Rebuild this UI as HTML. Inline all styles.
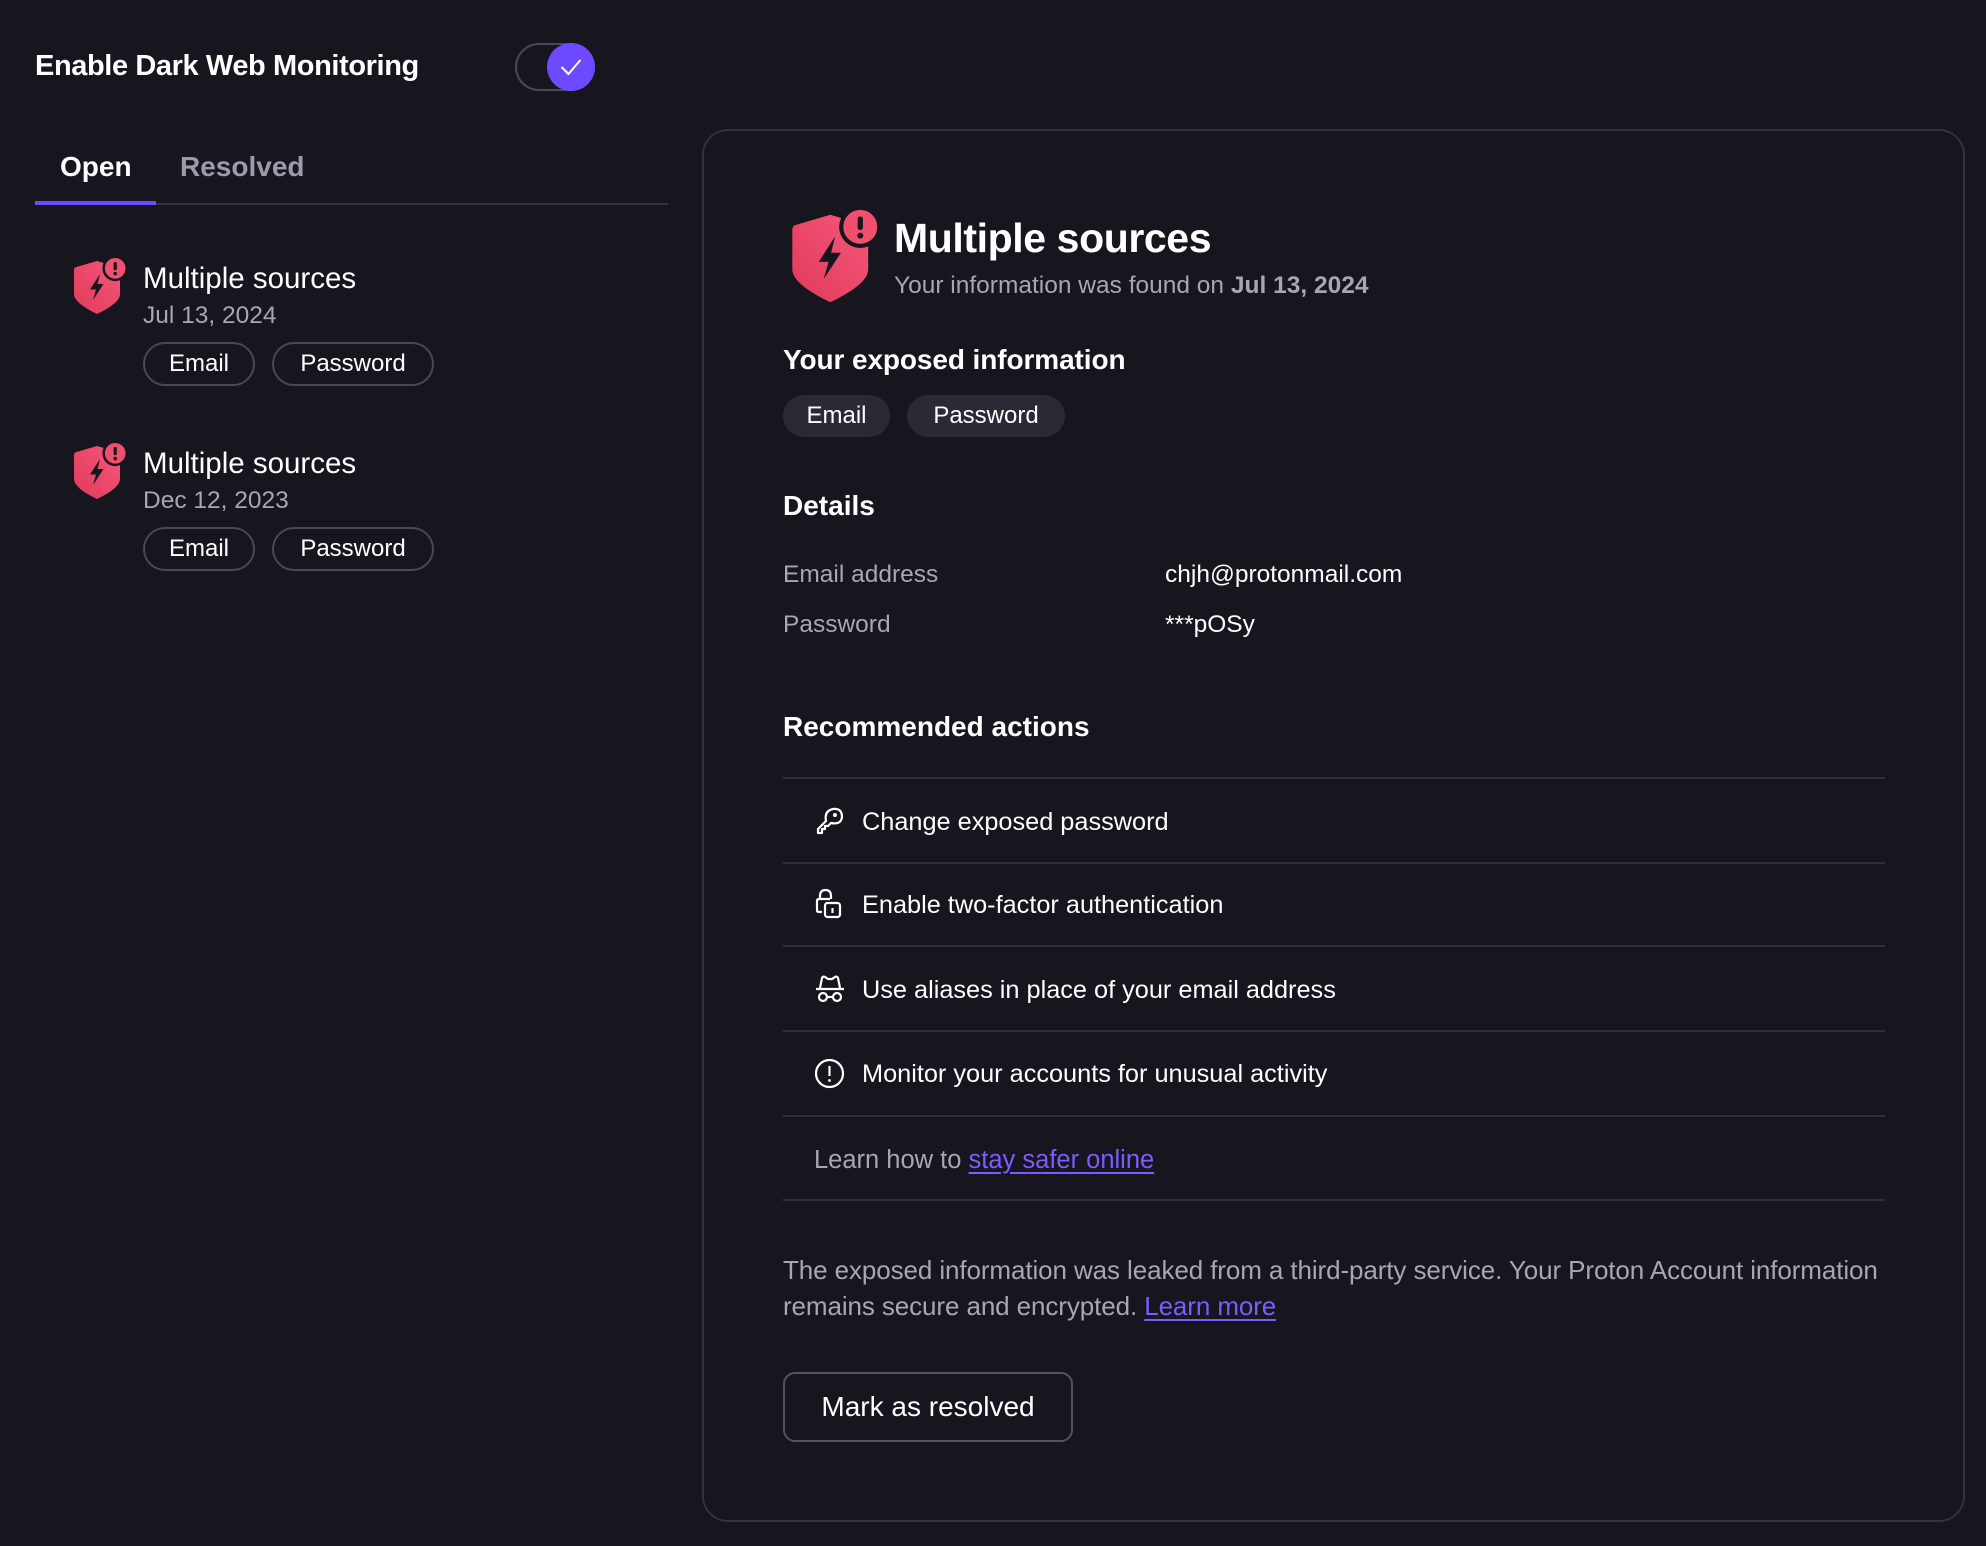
<!DOCTYPE html>
<html><head><meta charset="utf-8"><style>
*{margin:0;padding:0;box-sizing:border-box}
body{width:1986px;height:1546px;background:#17151d;color:#fff;font-family:"Liberation Sans",sans-serif;position:relative;overflow:hidden}
.a{position:absolute;white-space:nowrap}
.g{color:#a9a5b5}
.chip{position:absolute;height:44px;border:2px solid #4a4756;border-radius:22px;font-size:24px;line-height:40px;text-align:center}
.fchip{position:absolute;height:42px;background:#2b2934;border-radius:21px;font-size:24px;line-height:42px;text-align:center}
.line{position:absolute;left:783px;width:1102px;height:2px;background:#302e39}
.lnk{color:#7d5cff;text-decoration:underline;text-underline-offset:4px}
</style></head><body>
<svg width="0" height="0" style="position:absolute"><defs>
<linearGradient id="gr" x1="0" y1="1" x2="1" y2="0"><stop offset="0" stop-color="#e03a5a"/><stop offset="1" stop-color="#f6577a"/></linearGradient>
<symbol id="sh" viewBox="0 0 60 64">
<path d="M2 13 Q2 10.5 4.5 10 L25 4 L45.5 10 Q48 10.5 48 13 L48 37 Q48 46 25 57 Q2 46 2 37 Z" fill="url(#gr)"/>
<path d="M28 17 L18 32.5 L24 32.5 L21 43 L31.5 27 L25.5 27 Z" fill="#17151d"/>
<circle cx="43.2" cy="11.3" r="12.8" fill="#17151d"/>
<circle cx="43.2" cy="11.3" r="10.3" fill="#f0506e"/>
<rect x="41.6" y="5" width="3.2" height="8.2" rx="1.5" fill="#17151d"/>
<circle cx="43.2" cy="16.6" r="1.8" fill="#17151d"/>
</symbol></defs></svg>

<div class="a" style="left:35px;top:50px;font-size:29px;font-weight:bold;letter-spacing:-0.4px">Enable Dark Web Monitoring</div>
<div class="a" style="left:515px;top:43px;width:80px;height:48px;border:2px solid #4a4756;border-radius:24px"></div>
<div class="a" style="left:547px;top:43px;width:48px;height:48px;border-radius:50%;background:#6d4aff">
<svg width="48" height="48" viewBox="0 0 48 48"><path d="M15 24.5 L21.5 31 L33 17.5" stroke="#fff" stroke-width="2" fill="none" stroke-linecap="round" stroke-linejoin="round"/></svg></div>

<div class="a" style="left:60px;top:151px;font-size:28px;font-weight:bold">Open</div>
<div class="a g" style="left:180px;top:151px;font-size:28px;font-weight:bold;color:#9e9aab">Resolved</div>
<div class="a" style="left:35px;top:203px;width:633px;height:2px;background:#34323d"></div>
<div class="a" style="left:35px;top:201px;width:121px;height:4px;background:#6d4aff"></div>

<svg class="a" style="left:72px;top:257px" width="60" height="64"><use href="#sh"/></svg>
<div class="a" style="left:143px;top:262px;font-size:29.5px">Multiple sources</div>
<div class="a g" style="left:143px;top:302px;font-size:24.5px">Jul 13, 2024</div>
<div class="chip" style="left:143px;top:342px;width:112px">Email</div>
<div class="chip" style="left:272px;top:342px;width:162px">Password</div>

<svg class="a" style="left:72px;top:442px" width="60" height="64"><use href="#sh"/></svg>
<div class="a" style="left:143px;top:447px;font-size:29.5px">Multiple sources</div>
<div class="a g" style="left:143px;top:487px;font-size:24.5px">Dec 12, 2023</div>
<div class="chip" style="left:143px;top:527px;width:112px">Email</div>
<div class="chip" style="left:272px;top:527px;width:162px">Password</div>

<div class="a" style="left:702px;top:129px;width:1263px;height:1393px;border:2px solid #34323d;border-radius:26px"></div>

<svg class="a" style="left:789px;top:208px" width="99" height="106"><use href="#sh"/></svg>
<div class="a" style="left:894px;top:215px;font-size:41px;font-weight:bold;letter-spacing:-0.4px">Multiple sources</div>
<div class="a g" style="left:894px;top:272px;font-size:24.5px">Your information was found on <b>Jul 13, 2024</b></div>

<div class="a" style="left:783px;top:344px;font-size:28px;font-weight:bold;letter-spacing:-0.1px">Your exposed information</div>
<div class="fchip" style="left:783px;top:395px;width:107px">Email</div>
<div class="fchip" style="left:907px;top:395px;width:158px">Password</div>

<div class="a" style="left:783px;top:490px;font-size:28px;font-weight:bold">Details</div>
<div class="a g" style="left:783px;top:561px;font-size:24.5px">Email address</div>
<div class="a" style="left:1165px;top:561px;font-size:24.5px">chjh@protonmail.com</div>
<div class="a g" style="left:783px;top:611px;font-size:24.5px">Password</div>
<div class="a" style="left:1165px;top:611px;font-size:24.5px">***pOSy</div>

<div class="a" style="left:783px;top:711px;font-size:28px;font-weight:bold;letter-spacing:0px">Recommended actions</div>
<div class="line" style="top:777px"></div>
<div class="line" style="top:862px"></div>
<div class="line" style="top:945px"></div>
<div class="line" style="top:1030px"></div>
<div class="line" style="top:1115px"></div>
<div class="line" style="top:1199px"></div>

<svg class="a" style="left:815px;top:806px" width="30" height="30" viewBox="0 0 30 30" fill="none" stroke="#fff" stroke-width="2.2" stroke-linejoin="round"><path d="M11 15 Q9 5 18 3 Q27 2 27 11 Q26 19 16 17 L13 20 L10 20 L10 23 L7 23 L7 27 L3 27 L3 23 Z"/><circle cx="20" cy="9" r="2" fill="#fff" stroke="none"/></svg>
<div class="a" style="left:862px;top:808px;font-size:25.3px">Change exposed password</div>

<svg class="a" style="left:815px;top:888px" width="30" height="32" viewBox="0 0 30 32" fill="none" stroke="#fff" stroke-width="2.2" stroke-linejoin="round"><path d="M7 24 L4 24 Q2 24 2 22 L2 13 Q2 11 4 11 L15 11 M5 11 L5 8 Q5 2 10.5 2 Q16 2 16 8 L16 11"/><rect x="10" y="15" width="15" height="14" rx="2.5"/><path d="M17.5 20 L17.5 25"/></svg>
<div class="a" style="left:862px;top:891px;font-size:25.3px">Enable two-factor authentication</div>

<svg class="a" style="left:814px;top:974px" width="32" height="30" viewBox="0 0 32 30" fill="none" stroke="#fff" stroke-width="2.2"><path d="M6 14 L8 4 Q9 2 11 3 L14 5 L18 5 L21 3 Q23 2 24 4 L26 14 M2 15 L30 15"/><circle cx="9" cy="23" r="4"/><circle cx="23" cy="23" r="4"/><path d="M13 23 L19 23"/></svg>
<div class="a" style="left:862px;top:976px;font-size:25.3px">Use aliases in place of your email address</div>

<svg class="a" style="left:814px;top:1058px" width="31" height="31" viewBox="0 0 31 31" fill="none" stroke="#fff" stroke-width="2.2"><circle cx="15.5" cy="15.5" r="13.5"/><path d="M15.5 8 L15.5 18"/><circle cx="15.5" cy="22.5" r="1.4" fill="#fff" stroke="none"/></svg>
<div class="a" style="left:862px;top:1060px;font-size:25.3px">Monitor your accounts for unusual activity</div>

<div class="a g" style="left:814px;top:1146px;font-size:25.5px">Learn how to <span class="lnk">stay safer online</span></div>

<div class="a g" style="left:783px;top:1252px;font-size:26px;line-height:36px;letter-spacing:-0.1px">The exposed information was leaked from a third-party service. Your Proton Account information<br>remains secure and encrypted. <span class="lnk">Learn more</span></div>

<div class="a" style="left:783px;top:1372px;width:290px;height:70px;border:2px solid #55525f;border-radius:12px;font-size:28px;line-height:66px;text-align:center">Mark as resolved</div>
</body></html>
